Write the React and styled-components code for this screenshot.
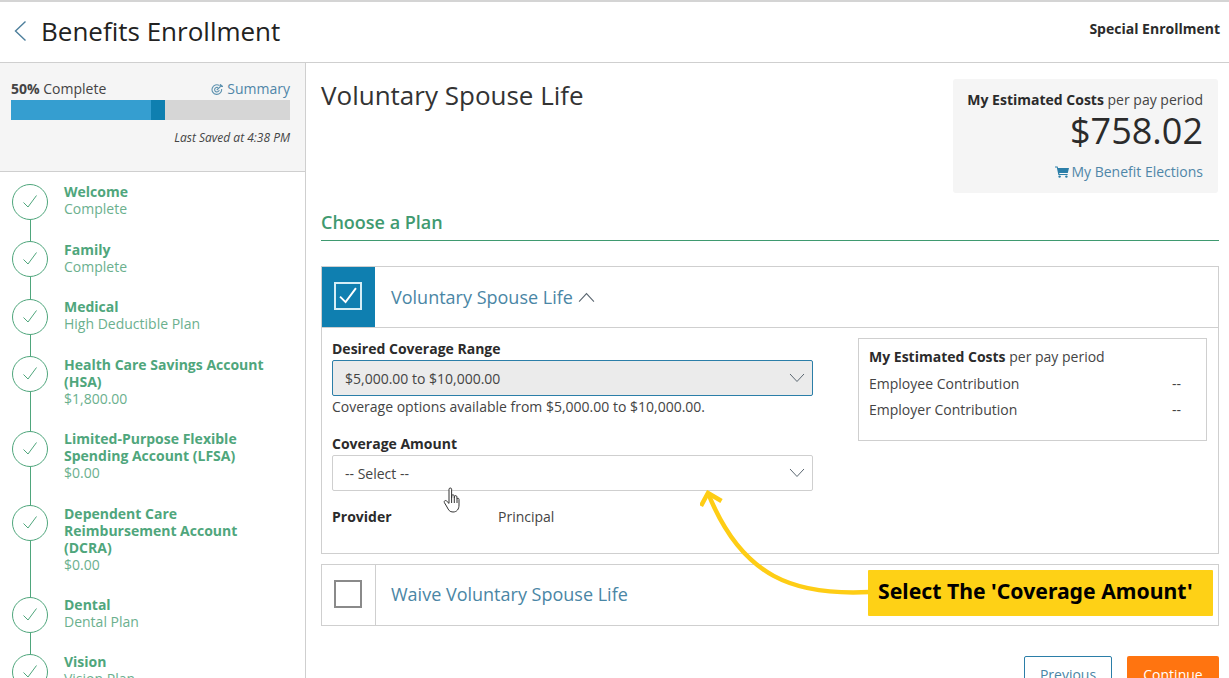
import React from "react";
import styled, { createGlobalStyle } from "styled-components";

const steps = [
  { title: ["Welcome"], sub: "Complete" },
  { title: ["Family"], sub: "Complete" },
  { title: ["Medical"], sub: "High Deductible Plan" },
  { title: ["Health Care Savings Account", "(HSA)"], sub: "$1,800.00" },
  { title: ["Limited-Purpose Flexible", "Spending Account (LFSA)"], sub: "$0.00" },
  { title: ["Dependent Care", "Reimbursement Account", "(DCRA)"], sub: "$0.00" },
  { title: ["Dental"], sub: "Dental Plan" },
  { title: ["Vision"], sub: "Vision Plan" },
];

const Check = ({ size = 18, color = "#4fa67c", width = 1 }) => (
  <svg width={size} height={size} viewBox="0 0 18 18" fill="none">
    <path d="M2.5 9.5 L7 14 L15.5 2.5" stroke={color} strokeWidth={width} />
  </svg>
);

const Chevron = ({ up, size = 16 }) => (
  <svg width={size} height={size * 0.6} viewBox="0 0 16 9.6" fill="none">
    <path d={up ? "M1 9 L8 1.5 L15 9" : "M1 1 L8 8.5 L15 1"} stroke="#5a6670" strokeWidth="1" />
  </svg>
);

const App = () => {
  return (
    <>
      <GlobalStyle />
      <Page>
        <Header>
          <HeaderLeft>
            <svg width="14" height="22" viewBox="0 0 14 22" fill="none">
              <path d="M12.5 1.5 L2.5 11 L12.5 20.5" stroke="#4d7f9c" strokeWidth="1.4" />
            </svg>
            <PageTitle>Benefits Enrollment</PageTitle>
          </HeaderLeft>
          <EnrollmentType>Special Enrollment</EnrollmentType>
        </Header>
        <Body>
          <Sidebar>
            <Progress>
              <ProgressTop>
                <span>
                  <b>50%</b> Complete
                </span>
                <SummaryLink>
                  <svg width="13" height="13" viewBox="0 0 13 13" fill="none" stroke="#5f93b0" strokeWidth="1.1">
                    <path d="M8.5 2.6 A4.8 4.8 0 1 0 10.6 6" />
                    <path d="M7 4.6 A2.3 2.3 0 1 0 8.2 7" />
                    <path d="M5.8 7 L11 2 M9.4 1 V3.4 H12" />
                  </svg>
                  Summary
                </SummaryLink>
              </ProgressTop>
              <Bar>
                <BarFill />
                <BarHead />
              </Bar>
              <Saved>Last Saved at 4:38 PM</Saved>
            </Progress>
            <Steps>
              {steps.map((step, i) => (
                <Step key={step.title[0]}>
                  <Marker>
                    <Circle>
                      <Check />
                    </Circle>
                    {i < steps.length - 1 && <Connector />}
                  </Marker>
                  <StepText>
                    {step.title.map((line) => (
                      <StepTitle key={line}>{line}</StepTitle>
                    ))}
                    <StepSub>{step.sub}</StepSub>
                  </StepText>
                </Step>
              ))}
            </Steps>
          </Sidebar>
          <Main>
            <TopRow>
              <MainTitle>Voluntary Spouse Life</MainTitle>
              <CostBox>
                <div>
                  <b>My Estimated Costs</b> per pay period
                </div>
                <Total>$758.02</Total>
                <ElectionsLink>
                  <svg width="14" height="12" viewBox="0 0 14 12" fill="#2b7ea8">
                    <path d="M0 0.5 H2.6 L3 2 H14 L12.8 7 H4.2 L4.4 8 H12.6 V9 H3.4 L1.8 1.5 H0 Z" />
                    <circle cx="4.6" cy="10.6" r="1.2" />
                    <circle cx="11.4" cy="10.6" r="1.2" />
                  </svg>
                  My Benefit Elections
                </ElectionsLink>
              </CostBox>
            </TopRow>
            <SectionTitle>Choose a Plan</SectionTitle>
            <PlanCard>
              <PlanHeader>
                <CheckCell $selected>
                  <CheckBox $selected>
                    <Check size={22} color="#fff" width={1.6} />
                  </CheckBox>
                </CheckCell>
                <PlanName>
                  Voluntary Spouse Life
                  <Chevron up size={17} />
                </PlanName>
              </PlanHeader>
              <PlanBody>
                <PlanForm>
                  <FieldLabel>Desired Coverage Range</FieldLabel>
                  <Select $filled>
                    $5,000.00 to $10,000.00
                    <Chevron />
                  </Select>
                  <Help>Coverage options available from $5,000.00 to $10,000.00.</Help>
                  <FieldLabel>Coverage Amount</FieldLabel>
                  <Select>
                    -- Select --
                    <Chevron />
                  </Select>
                  <ProviderRow>
                    <b>Provider</b>
                    <span>Principal</span>
                  </ProviderRow>
                </PlanForm>
                <CostTable>
                  <CostRow>
                    <span>
                      <b>My Estimated Costs</b> per pay period
                    </span>
                  </CostRow>
                  <CostRow>
                    <span>Employee Contribution</span>
                    <span>--</span>
                  </CostRow>
                  <CostRow>
                    <span>Employer Contribution</span>
                    <span>--</span>
                  </CostRow>
                </CostTable>
              </PlanBody>
            </PlanCard>
            <PlanCard>
              <PlanHeader $plain>
                <CheckCell>
                  <CheckBox />
                </CheckCell>
                <PlanName $plain>Waive Voluntary Spouse Life</PlanName>
              </PlanHeader>
            </PlanCard>
            <Actions>
              <PrevButton>Previous</PrevButton>
              <NextButton>Continue</NextButton>
            </Actions>
          </Main>
        </Body>
        <Pointer width="22" height="26" viewBox="0 0 22 26" fill="#fff" stroke="#333" strokeWidth="1">
          <path d="M6 2.2 C6 0.6 8.6 0.6 8.6 2.2 V11 L8.8 8.6 C9 7.4 11 7.4 11.2 8.8 L11.3 11 L11.6 9.4 C12 8.2 13.8 8.4 13.9 9.8 L14 12 C14.4 10.8 16 11 16 12.4 V18 C16 22 14 25 10 25 C6.5 25 5.6 23 4 20 L1.4 15.6 C0.6 14 2.4 12.8 3.6 14 L6 16.4 Z" />
          <path d="M8.6 11 V16 M11.3 11 V16 M14 12 V16" />
        </Pointer>
        <Arrow width="180" height="112" viewBox="0 0 180 112" fill="none" stroke="#fecd15" strokeWidth="4.5">
          <path d="M170 102 C95 106 42 88 8 3" />
          <path d="M1 16 L8 3 L21.5 11" />
        </Arrow>
        <Callout>Select The 'Coverage Amount'</Callout>
      </Page>
    </>
  );
};

const GlobalStyle = createGlobalStyle`
  html, body {
    margin: 0;
    height: 100%;
    overflow: hidden;
    background: #fff;
  }
  body {
    font-family: "Open Sans", "Liberation Sans", sans-serif;
    font-size: 14px;
    color: #333;
  }
  b {
    font-weight: 700;
  }
`;

const Page = styled.div`
  position: relative;
  width: 1229px;
  height: 678px;
  overflow: hidden;
  border-top: 2px solid #d4d4d4;
  box-sizing: border-box;
`;

const Header = styled.header`
  height: 60px;
  display: flex;
  align-items: flex-start;
  justify-content: space-between;
  padding: 0 9px 0 13px;
  border-bottom: 1px solid #cfcfcf;
`;

const HeaderLeft = styled.div`
  display: flex;
  align-items: center;
  gap: 14px;
  height: 58px;
`;

const PageTitle = styled.h1`
  margin: 0;
  font-size: 26px;
  font-weight: 400;
  color: #222;
`;

const EnrollmentType = styled.div`
  margin-top: 17px;
  font-size: 14px;
  font-weight: 700;
  line-height: 20px;
  color: #2b2b2b;
`;

const Body = styled.div`
  display: flex;
  height: 615px;
`;

const Sidebar = styled.aside`
  width: 305px;
  flex: none;
  border-right: 1px solid #cfcfcf;
`;

const Progress = styled.div`
  height: 108px;
  box-sizing: content-box;
  padding: 0 15px 0 11px;
  background: #f5f5f5;
  border-bottom: 1px solid #cfcfcf;
`;

const ProgressTop = styled.div`
  display: flex;
  justify-content: space-between;
  padding-top: 16px;
  line-height: 20px;
  color: #444;
`;

const SummaryLink = styled.span`
  display: flex;
  align-items: center;
  gap: 3px;
  color: #4f86a8;
`;

const Bar = styled.div`
  display: flex;
  height: 20px;
  margin-top: 1px;
  background: #d6d6d6;
`;

const BarFill = styled.div`
  width: 140px;
  background: #359ed0;
`;

const BarHead = styled.div`
  width: 14px;
  background: #0f7fb0;
`;

const Saved = styled.div`
  margin-top: 9px;
  font-size: 12px;
  font-style: italic;
  text-align: right;
  color: #444;
`;

const Steps = styled.div`
  padding: 12px 0 0 12px;
`;

const Step = styled.div`
  display: flex;
  gap: 16px;
`;

const Marker = styled.div`
  display: flex;
  flex-direction: column;
  align-items: center;
  width: 36px;
  flex: none;
`;

const Circle = styled.div`
  width: 36px;
  height: 36px;
  flex: none;
  box-sizing: border-box;
  display: flex;
  align-items: center;
  justify-content: center;
  border: 1px solid #4fa67c;
  border-radius: 50%;
`;

const Connector = styled.div`
  width: 1px;
  flex: 1;
  background: #4fa67c;
`;

const StepText = styled.div`
  margin-top: -0.6px;
  padding-bottom: 24.03px;
  line-height: 17px;
`;

const StepTitle = styled.div`
  font-weight: 700;
  font-size: 14px;
  color: #4fa67c;
`;

const StepSub = styled.div`
  font-size: 14px;
  color: #6bb08e;
`;

const Main = styled.main`
  flex: 1;
  padding: 0 10px 0 15px;
`;

const TopRow = styled.div`
  display: flex;
  justify-content: space-between;
  align-items: flex-start;
  padding-top: 16px;
`;

const MainTitle = styled.h2`
  margin: 0;
  font-size: 26px;
  font-weight: 400;
  line-height: 33px;
  color: #333;
`;

const CostBox = styled.div`
  width: 265px;
  height: 114px;
  margin-right: 1px;
  box-sizing: border-box;
  padding: 11px 15px 0 5px;
  text-align: right;
  background: #f5f5f5;
  border-radius: 3px;
  line-height: 20px;
  color: #444;
  b {
    color: #2b2b2b;
  }
`;

const Total = styled.div`
  font-size: 36px;
  line-height: 40px;
  margin-top: 1px;
  color: #2b2b2b;
`;

const ElectionsLink = styled.div`
  display: flex;
  justify-content: flex-end;
  align-items: center;
  gap: 2px;
  margin-top: 11px;
  color: #4f86a8;
`;

const SectionTitle = styled.h3`
  margin: 16px 0 25px;
  height: 31px;
  box-sizing: content-box;
  font-size: 18px;
  font-weight: 600;
  line-height: 26px;
  color: #3f9a70;
  border-bottom: 1px solid #3f9a70;
`;

const PlanCard = styled.section`
  border: 1px solid #cfcfcf;
  margin-bottom: 10px;
`;

const PlanHeader = styled.div`
  display: flex;
  align-items: stretch;
  height: 60px;
  border-bottom: ${(p) => (p.$plain ? "none" : "1px solid #cfcfcf")};
`;

const CheckCell = styled.div`
  width: ${(p) => (p.$selected ? "53px" : "54px")};
  margin-right: ${(p) => (p.$selected ? "1px" : "0")};
  flex: none;
  box-sizing: border-box;
  display: flex;
  align-items: center;
  justify-content: center;
  padding: 0 1px 2px 0;
  background: ${(p) => (p.$selected ? "#0f7fb0" : "#fff")};
  border-right: ${(p) => (p.$selected ? "none" : "1px solid #cfcfcf")};
`;

const CheckBox = styled.div`
  width: 28px;
  height: 28px;
  box-sizing: border-box;
  display: flex;
  align-items: center;
  justify-content: center;
  border: 2px solid ${(p) => (p.$selected ? "#d5eef6" : "#8a8a8a")};
`;

const PlanName = styled.div`
  display: flex;
  align-items: center;
  gap: 5px;
  padding: 0 0 ${(p) => (p.$plain ? "2px" : "0")} 15px;
  font-size: 18px;
  color: #4a86a5;
`;

const PlanBody = styled.div`
  display: flex;
  justify-content: space-between;
  height: 215px;
  padding: 10px 11px 0 10px;
`;

const PlanForm = styled.div`
  width: 481px;
`;

const FieldLabel = styled.div`
  font-weight: 700;
  line-height: 20px;
  padding-top: 1px;
  margin-bottom: 1px;
  color: #2b2b2b;
`;

const Select = styled.div`
  height: 36px;
  box-sizing: border-box;
  display: flex;
  align-items: center;
  justify-content: space-between;
  padding: 0 7px 0 12px;
  background: ${(p) => (p.$filled ? "#ebebeb" : "#fff")};
  border: 1px solid ${(p) => (p.$filled ? "#2b7ea8" : "#cfcfcf")};
  border-radius: 2px;
  color: #444;
`;

const Help = styled.div`
  line-height: 20px;
  margin: 1px 0 16px;
  color: #444;
`;

const ProviderRow = styled.div`
  display: flex;
  margin-top: 16px;
  line-height: 20px;
  color: #444;
  b {
    width: 166px;
    color: #2b2b2b;
  }
`;

const CostTable = styled.div`
  width: 349px;
  height: 103px;
  box-sizing: border-box;
  padding: 8px 25px 0 10px;
  border: 1px solid #cfcfcf;
  color: #444;
  b {
    color: #2b2b2b;
  }
`;

const CostRow = styled.div`
  display: flex;
  justify-content: space-between;
  line-height: 20px;
  margin-bottom: 6.5px;
`;

const Actions = styled.div`
  display: flex;
  justify-content: flex-end;
  gap: 15px;
  margin-top: 30px;
`;

const PrevButton = styled.button`
  width: 88px;
  height: 36px;
  font: inherit;
  color: #4a86a5;
  background: #fff;
  border: 1px solid #2b7ea8;
  border-radius: 2px;
`;

const NextButton = styled.button`
  width: 92px;
  height: 36px;
  font: inherit;
  color: #fff;
  background: #ff7410;
  border: none;
  border-radius: 2px;
`;

const Pointer = styled.svg`
  position: absolute;
  left: 443px;
  top: 485px;
`;

const Arrow = styled.svg`
  position: absolute;
  left: 700px;
  top: 488px;
`;

const Callout = styled.div`
  position: absolute;
  left: 868px;
  top: 568px;
  width: 345px;
  height: 46px;
  box-sizing: border-box;
  display: flex;
  align-items: center;
  padding: 0 0 5px 10px;
  background: #fed116;
  border-radius: 1px;
  font-family: "Noto Sans", "Open Sans", sans-serif;
  font-size: 21.2px;
  font-weight: 700;
  color: #000;
`;

export default App;
